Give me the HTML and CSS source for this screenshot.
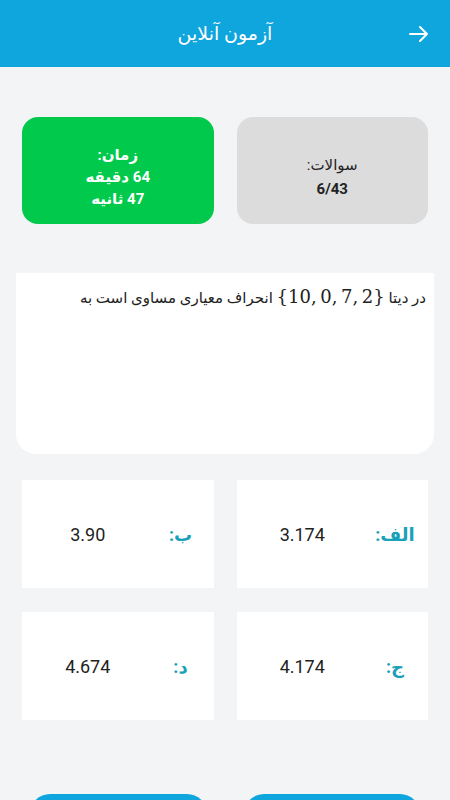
FILE: index.html
```html
<!DOCTYPE html>
<html lang="fa" dir="rtl">
<head>
    <meta charset="UTF-8">
    <meta name="viewport" content="width=device-width, initial-scale=1.0">
    <title>آزمون آنلاین</title>
    <link rel="stylesheet" href="styles.css">
</head>
<body>
    <!-- Top bar -->
    <div class="topbar">
        <span class="back">
            <svg width="20" height="18" viewBox="0 0 20 18">
                <path d="M1 9H18M11 2L18 9L11 16" fill="none" stroke="#fff" stroke-width="2" stroke-linecap="round" stroke-linejoin="round"/>
            </svg>
        </span>
        <h1>آزمون آنلاین</h1>
    </div>

    <div class="page">
        <!-- Stats -->
        <div class="stats">
            <div class="stat stat-count">
                <div>سوالات:</div>
                <div class="bold">6/43</div>
            </div>
            <div class="stat stat-time">
                <div>زمان:</div>
                <div>64 دقیقه</div>
                <div>47 ثانیه</div>
            </div>
        </div>

        <!-- Question -->
        <div class="question">
            <p>در دیتا <span class="math">{10,&thinsp;0,&thinsp;7,&thinsp;2}</span> انحراف معیاری مساوی است به</p>
        </div>

        <!-- Answers -->
        <div class="answers">
            <div class="answer">
                <span class="label">الف:</span>
                <span class="value">3.174</span>
            </div>
            <div class="answer">
                <span class="label">ب:</span>
                <span class="value">3.90</span>
            </div>
            <div class="answer">
                <span class="label">ج:</span>
                <span class="value">4.174</span>
            </div>
            <div class="answer">
                <span class="label">د:</span>
                <span class="value">4.674</span>
            </div>
        </div>

        <div class="buttons">
            <button aria-label="بعدی"></button>
            <button aria-label="قبلی"></button>
        </div>
    </div>
</body>
</html>
```

FILE: styles.css
```css
body {
    margin: 0;
    font-family: Roboto, "DejaVu Sans", sans-serif;
    background-color: #f3f4f6;
    color: #222;
    overflow: hidden;
}

.topbar {
    height: 67px;
    background-color: #0fa5dd;
    display: flex;
    align-items: center;
    justify-content: center;
    position: relative;
}

.topbar h1 {
    margin: 0;
    color: #fff;
    font-size: 19px;
    font-weight: normal;
}

.back {
    position: absolute;
    right: 21px;
    top: 25px;
}

.page {
    padding: 50px 22px 0;
}

.stats {
    display: grid;
    grid-template-columns: 1fr 1fr;
    gap: 23px;
}

.stat {
    height: 107px;
    border-radius: 16px;
    display: flex;
    flex-direction: column;
    align-items: center;
    justify-content: center;
    font-size: 15px;
    line-height: 22px;
    box-sizing: border-box;
}

.stat-count {
    background-color: #dcdcdc;
    color: #222;
    line-height: 24px;
    padding-top: 12px;
}

.stat-time {
    background-color: #00c94b;
    color: #fff;
    font-weight: bold;
    padding-top: 12px;
}

.bold {
    font-weight: bold;
}

.question {
    margin: 49px -6px 0;
    height: 181px;
    background-color: #fff;
    border-radius: 0 0 20px 20px;
    padding: 12px 8px 0;
    box-sizing: border-box;
}

.question p {
    margin: 0;
    font-size: 15px;
    line-height: 24px;
}

.math {
    display: inline-block;
    direction: ltr;
    font-family: "DejaVu Serif", "Liberation Serif", serif;
    font-size: 18px;
}

.answers {
    margin-top: 26px;
    display: grid;
    grid-template-columns: 1fr 1fr;
    column-gap: 23px;
    row-gap: 24px;
}

.answer {
    height: 108px;
    background-color: #fff;
    display: flex;
    align-items: center;
}

.label {
    width: 50px;
    margin-right: 8px;
    text-align: center;
    color: #1aa0b8;
    font-weight: bold;
    font-size: 18px;
}

.value {
    flex: 1;
    text-align: center;
    padding-right: 2px;
    font-size: 18px;
    color: #222;
}

.buttons {
    margin: 74px 8px 0;
    display: grid;
    grid-template-columns: 1fr 1fr;
    gap: 37px;
}

.buttons button {
    height: 44px;
    border: none;
    border-radius: 20px;
    background-color: #0fa5dd;
}
```
